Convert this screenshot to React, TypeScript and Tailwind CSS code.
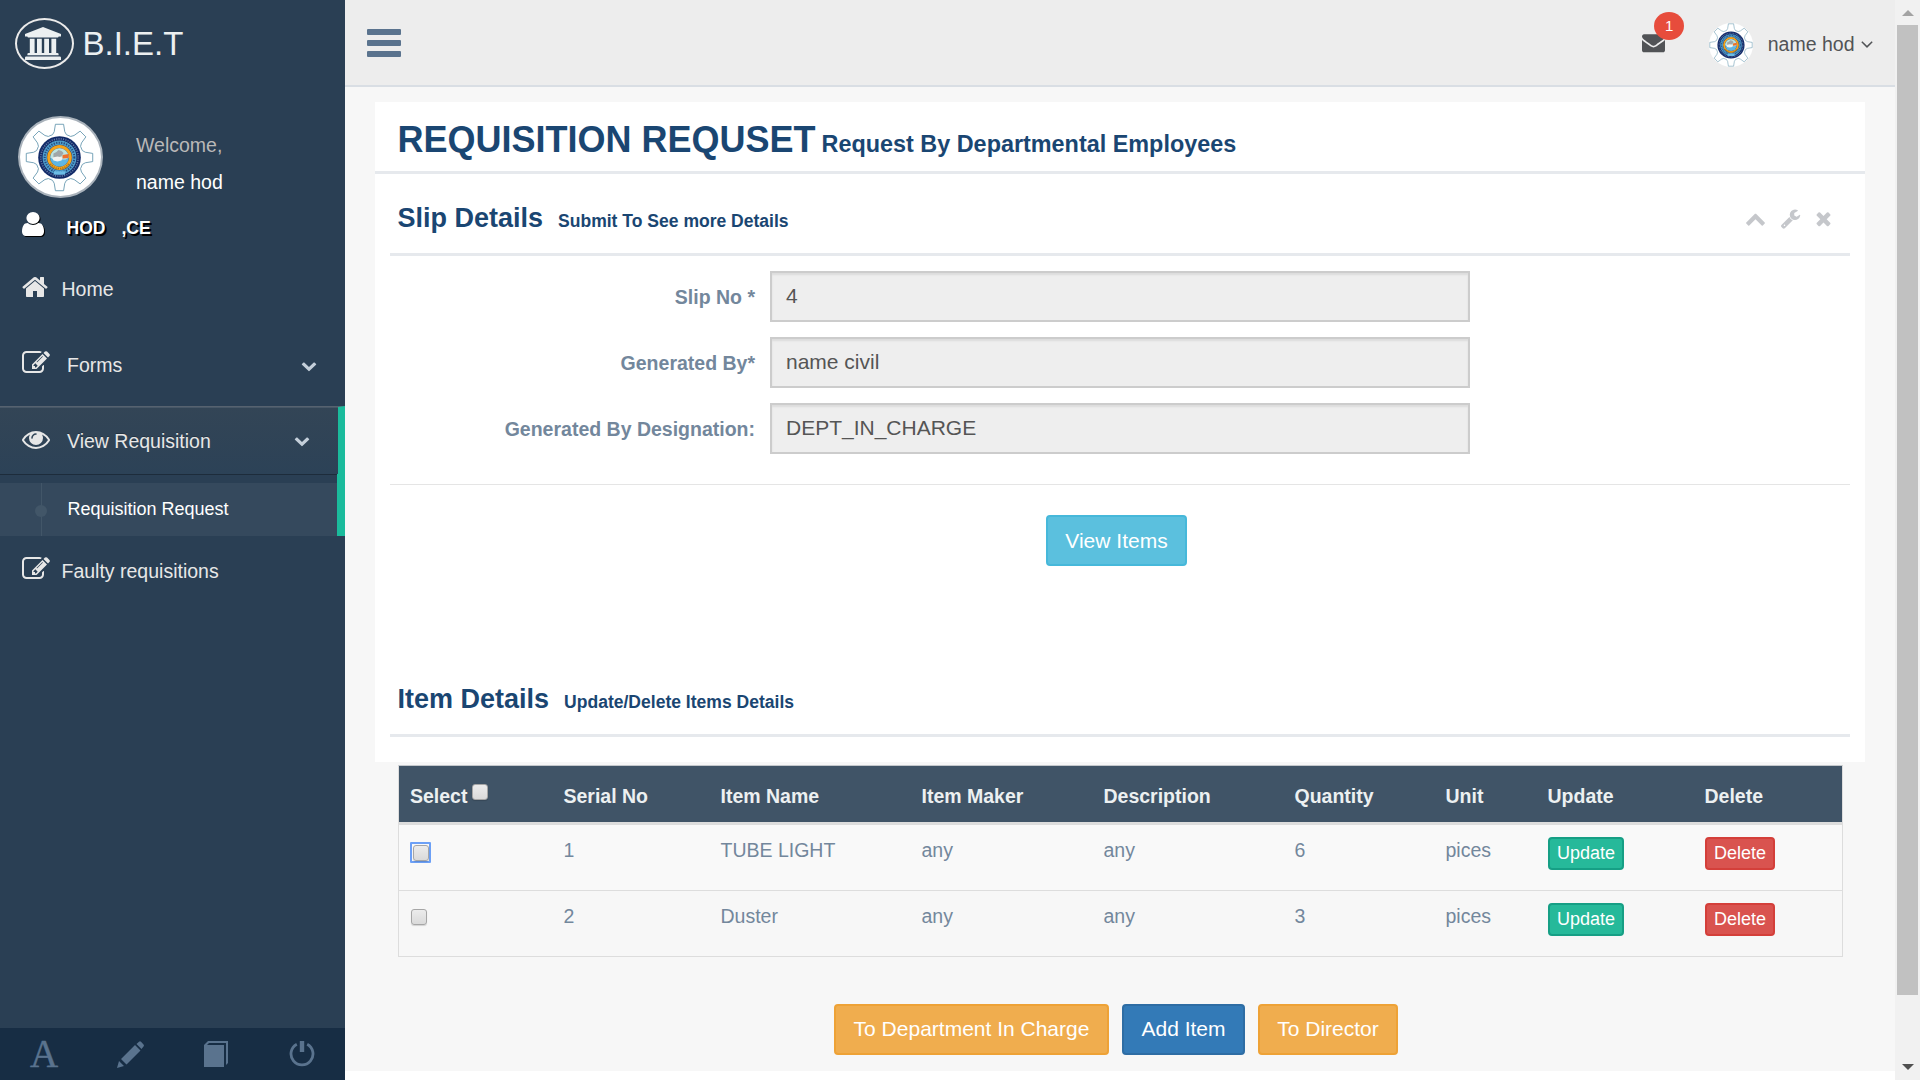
import React from "react";

const EDIT =
  "M888 1184l116-116-152-152-116 116v56h96v96h56zm440-720q-16-16-33 1l-350 350q-17 17-1 33t33-1l350-350q17-17 1-33zm80 594v190q0 119-84.5 203.5t-203.5 84.5h-832q-119 0-203.5-84.5t-84.5-203.5v-832q0-119 84.5-203.5t203.5-84.5h832q63 0 117 25 15 7 18 23 3 17-9 29l-49 49q-14 14-32 8-23-6-45-6h-832q-66 0-113 47t-47 113v832q0 66 47 113t113 47h832q66 0 113-47t47-113v-126q0-13 9-22l64-64q15-15 35-7t20 29zm-96-738l288 288-672 672h-288v-288zm444 132l-92 92-288-288 92-92q28-28 68-28t68 28l152 152q28 28 28 68t-28 68z";
const HOME =
  "M1472 992v480q0 26-19 45t-45 19h-384v-384h-256v384h-384q-26 0-45-19t-19-45v-480q0-1 .5-3t.5-3l575-474 575 474q1 2 1 6zm223-69l-62 74q-8 9-21 11h-3q-13 0-21-7l-692-577-692 577q-12 8-24 7-13-2-21-11l-62-74q-8-10-7-23.5t11-21.5l719-599q32-26 76-26t76 26l244 204v-195q0-14 9-23t23-9h192q14 0 23 9t9 23v408l219 182q10 8 11 21.5t-7 23.5z";
const EYE =
  "M1664 960q-152-236-381-353 61 104 61 225 0 185-131.5 316.5t-316.5 131.5-316.5-131.5-131.5-316.5q0-121 61-225-229 117-381 353 133 205 333.5 326.5t434.5 121.5 434.5-121.5 333.5-326.5zm-720-384q0-20-14-34t-34-14q-125 0-214.5 89.5t-89.5 214.5q0 20 14 34t34 14 34-14 14-34q0-86 61-147t147-61q20 0 34-14t14-34zm848 384q0 34-20 69-140 230-376.5 368.5t-499.5 138.5-499.5-139-376.5-368q-20-35-20-69t20-69q140-229 376.5-368t499.5-139 499.5 139 376.5 368q20 35 20 69z";
const BANK =
  "M960 0l960 384v128h-128q0 26-20.5 45t-48.5 19h-1526q-28 0-48.5-19t-20.5-45h-128v-128zm-704 640h256v768h128v-768h256v768h128v-768h256v768h128v-768h256v768h59q28 0 48.5 19t20.5 45v64h-1664v-64q0-26 20.5-45t48.5-19h59v-768zm1595 960q28 0 48.5 19t20.5 45v128h-1920v-128q0-26 20.5-45t48.5-19h1782z";
const USER =
  "M1536 1399q0 109-62.5 187t-150.5 78h-854q-88 0-150.5-78t-62.5-187q0-85 8.5-160.5t31.5-152 58.5-131 94-89 134.5-34.5q131 128 313 128t313-128q76 0 134.5 34.5t94 89 58.5 131 31.5 152 8.5 160.5zm-256-887q0 159-112.5 271.5t-271.5 112.5-271.5-112.5-112.5-271.5 112.5-271.5 271.5-112.5 271.5 112.5 112.5 271.5z";
const DOWN =
  "M1683 808l-742 741q-19 19-45 19t-45-19l-742-741q-19-19-19-45.5t19-45.5l166-165q19-19 45-19t45 19l531 531 531-531q19-19 45-19t45 19l166 165q19 19 19 45.5t-19 45.5z";
const UP =
  "M1683 1331l-166 165q-19 19-45 19t-45-19l-531-531-531 531q-19 19-45 19t-45-19l-166-165q-19-19-19-45.5t19-45.5l742-741q19-19 45-19t45 19l742 741q19 19 19 45.5t-19 45.5z";
const WRENCH =
  "M448 1472q0-26-19-45t-45-19-45 19-19 45 19 45 45 19 45-19 19-45zm644-420l-682 682q-37 37-90 37-52 0-91-37l-106-108q-38-36-38-90 0-53 38-91l681-681q39 98 114.5 173.5t173.5 114.5zm634-435q0 39-23 106-47 134-164.5 217.5t-258.5 83.5q-185 0-316.5-131.5t-131.5-316.5 131.5-316.5 316.5-131.5q58 0 121.5 16.5t107.5 46.5q16 11 16 28t-16 28l-293 169v224l193 107q5-3 79-48.5t135.5-81 70.5-35.5q15 0 23.5 10t8.5 25z";
const CLOSE =
  "M1490 1322q0 40-28 68l-136 136q-28 28-68 28t-68-28l-294-294-294 294q-28 28-68 28t-68-28l-136-136q-28-28-28-68t28-68l294-294-294-294q-28-28-28-68t28-68l136-136q28-28 68-28t68 28l294 294 294-294q28-28 68-28t68 28l136 136q28 28 28 68t-28 68l-294 294 294 294q28 28 28 68z";
const ENVELOPE =
  "M1792 710v794q0 66-47 113t-113 47h-1472q-66 0-113-47t-47-113v-794q44 49 101 87 362 246 497 345 57 42 92.5 65.5t94.5 48 110 24.5h2q51 0 110-24.5t94.5-48 92.5-65.5q170-123 498-345 57-39 100-87zm0-294q0 79-49 151t-122 123q-376 261-468 325-10 7-42.5 31t-54 38.5-52 32.5-57.5 27-50 9h-2q-23 0-50-9t-57.5-27-52-32.5-54-38.5-42.5-31q-91-64-262-182.5t-205-142.5q-62-42-117-115.5t-55-136.5q0-78 41.5-130t118.5-52h1472q65 0 112.5 47t47.5 113z";
const ANGLE =
  "M1395 736q0 13-10 23l-466 466q-10 10-23 10t-23-10l-466-466q-10-10-10-23t10-23l50-50q10-10 23-10t23 10l393 393 393-393q10-10 23-10t23 10l50 50q10 10 10 23z";

function Glyph({ d, className, box = "0 0 1792 1792" }: { d: string; className: string; box?: string }) {
  return (
    <svg viewBox={box} fill="currentColor" preserveAspectRatio="none" className={"shrink-0 " + className}>
      <path d={d} />
    </svg>
  );
}

function gearPath() {
  const pts: string[] = [];
  const profile: [number, number][] = [
    [-7, 33],
    [7, 33],
    [11.5, 26],
    [17, 23.5],
    [28, 23.5],
    [33.5, 26],
  ];
  for (let t = 0; t < 8; t++) {
    for (const [a, r] of profile) {
      const rad = ((t * 45 + a - 90) * Math.PI) / 180;
      pts.push((r * Math.cos(rad)).toFixed(2) + " " + (r * Math.sin(rad)).toFixed(2));
    }
  }
  return "M" + pts.join("L") + "Z";
}

function Seal({ className }: { className: string }) {
  return (
    <svg viewBox="-34 -34 68 68" className={className}>
      <path d={gearPath()} fill="#fff" stroke="#6b9bb2" strokeWidth="0.9" strokeLinejoin="round" />
      <circle r="21" fill="#122a68" />
      <circle r="18.4" fill="none" stroke="#8fa3c4" strokeWidth="1.6" strokeDasharray="1.1 1.2" opacity="0.65" />
      <circle r="14.6" fill="none" stroke="#4f9dca" strokeWidth="4.2" />
      <circle r="14.6" fill="none" stroke="#234a80" strokeWidth="2" strokeDasharray="1.2 1.3" />
      <path d="M-5.5 13.500h11v3.400h-11z" fill="#6cbce6" />
      <circle r="10.700" fill="none" stroke="#f5a31a" strokeWidth="3" />
      <path d="M-9 6.200A10.900 10.900 0 0 0 9 6.200" fill="none" stroke="#a8741c" strokeWidth="1.600" strokeDasharray="1.2 1" />
      <circle r="9.200" fill="#5fb6e4" />
      <path d="M-9 0A9 9 0 0 1 9 0L6 2-6 2Z" fill="#bfe3df" />
      <path d="M-6-4l3-1.500 2-2 3 1 2 2-2 3-4 2-4 1z" fill="#a0a6a8" />
      <path d="M-7 0l5-1 5 1-1 3-4 1-4-1z" fill="#f2f2f0" />
      <path d="M3-2.500l6-1v4l-6 .5z" fill="#ee6f2c" />
    </svg>
  );
}

function Check() {
  return (
    <span className="inline-block h-[16px] w-[16px] rounded-[3px] border border-[#a6a6a6] bg-linear-to-b from-[#ececec] to-[#dadada] shadow-[0_1px_1px_rgba(0,0,0,0.15)]" />
  );
}

const fields = [
  { label: "Slip No *", value: "4" },
  { label: "Generated By*", value: "name civil" },
  { label: "Generated By Designation:", value: "DEPT_IN_CHARGE" },
];

const headers = ["Serial No", "Item Name", "Item Maker", "Description", "Quantity", "Unit", "Update", "Delete"];

const rows = [
  { cells: ["1", "TUBE LIGHT", "any", "any", "6", "pices"], focused: true },
  { cells: ["2", "Duster", "any", "any", "3", "pices"], focused: false },
];

function Sidebar() {
  return (
    <aside className="flex h-full w-[345px] shrink-0 flex-col bg-[#2A3F54] text-[19.5px] text-[#E7E7E7]">
      <div className="flex h-[87px] shrink-0 items-center pl-[15px] text-[#ECF0F1]">
        <span className="flex h-[51px] w-[59px] items-center justify-center rounded-[50%] border-2 border-[#EAEAEA] pr-[3px]">
          <Glyph d={BANK} box="0 0 1920 1792" className="h-[33px] w-[36px]" />
        </span>
        <span className="ml-[8.5px] text-[33px] leading-[33px]">B.I.E.T</span>
      </div>

      <div className="mt-[29px] flex h-[82px] shrink-0 pl-[18px]">
        <span className="flex h-[82px] w-[85px] items-center justify-center rounded-[50%] border-2 border-[#A9B2BB] bg-white pr-[2px]">
          <Seal className="h-[69px] w-[69px]" />
        </span>
        <div className="ml-[33px] pt-[15px] leading-[29px]">
          <div className="h-[37px] text-[#BAB8B8]">Welcome,</div>
          <div className="text-white">name hod</div>
        </div>
      </div>

      <div className="mt-[14px] flex h-[33px] shrink-0 items-center pl-[22px] text-white">
        <Glyph d={USER} box="256 128 1280 1536" className="mb-[10px] h-[24px] w-[22px] drop-shadow-[1px_1px_0px_#000]" />
        <span className="ml-[22.5px] text-[17.55px] font-bold whitespace-pre [text-shadow:2px_2px_#000]">
          HOD<span className="ml-[16px]">,CE</span>
        </span>
      </div>

      <div className="mt-[9px] flex h-[71px] shrink-0 items-center pl-[21px]">
        <Glyph d={HOME} className="mb-[6px] h-[28px] w-[28px]" />
        <span className="ml-[12.5px] pt-px">Home</span>
      </div>

      <div className="flex h-[81px] shrink-0 items-center pr-[28px] pl-[22px]">
        <Glyph d={EDIT} className="mb-[6px] h-[28px] w-[28px]" />
        <span className="ml-[17px] flex-1">Forms</span>
        <Glyph d={DOWN} className="h-[15px] w-[16px] text-[#C4CFDA]" />
      </div>

      <div className="flex h-[68px] shrink-0 items-center border-t border-r-[7px] border-t-[#56626f] border-r-[#1ABB9C] bg-linear-to-b from-[#334556] to-[#2C4257] pr-[28px] pl-[22px] shadow-[inset_0_1px_0_rgba(255,255,255,0.1),0_1px_0_#1d2c3b] [text-shadow:0_-1px_0_rgba(0,0,0,0.25)]">
        <Glyph d={EYE} className="mb-[4px] h-[28px] w-[28px]" />
        <span className="ml-[17px] flex-1 pt-[3px]">View Requisition</span>
        <Glyph d={DOWN} className="h-[15px] w-[16px] text-[#C4CFDA]" />
      </div>
      <div className="h-[62px] shrink-0 border-r-8 border-[#1ABB9C] pt-[9px]">
        <div className="relative flex h-[53px] items-center bg-[#35495D] pl-[67.5px] text-[18px] text-white">
          <span className="absolute top-0 left-[41px] h-full w-px bg-[#425668]" />
          <span className="absolute top-[22px] left-[35px] h-[12px] w-[12px] rounded-full bg-[#425668]" />
          Requisition Request
        </div>
      </div>

      <div className="flex h-[70px] shrink-0 items-center pl-[22px]">
        <Glyph d={EDIT} className="mb-[5px] h-[28px] w-[28px]" />
        <span className="ml-[11.5px] pt-px">Faulty requisitions</span>
      </div>

      <div className="mt-auto grid h-[52px] shrink-0 grid-cols-4 items-center justify-items-center bg-[#172D44] pl-px text-[#5A738E]">
        <span className="font-['Liberation_Serif',serif] text-[39px] leading-[52px] [-webkit-text-stroke:0.4px_#5A738E]">A</span>
        <svg viewBox="0 0 27 27" className="h-[27px] w-[27px]" fill="currentColor">
          <path d="M0 27l2-7 5 5zM4 18L18 4l5.500 5.500-14 14zM19.500 3l2.500-2.300q1-.9 2 0l2.500 2.800q.9 1 0 2L24.500 8z" />
        </svg>
        <svg viewBox="0 0 24 26" className="h-[26px] w-[24px]" fill="currentColor">
          <path d="M0 4L4 0H24V22L22 24V2H5L3 4H20V26H0Z" />
        </svg>
        <svg viewBox="0 0 26 26" className="h-[26px] w-[26px]">
          <path d="M7.800 3.200A11 11 0 1 0 18.200 3.200" fill="none" stroke="currentColor" strokeWidth="2.800" />
          <path d="M10.800 0h4.400v11h-4.400z" fill="currentColor" />
        </svg>
      </div>
    </aside>
  );
}

function Topbar() {
  return (
    <header className="flex h-[87px] shrink-0 items-center border-b-2 border-[#D9DEE4] bg-[#EDEDED] pr-[18px] pl-[22px]">
      <div className="mt-px flex w-[34px] flex-col gap-[5px]">
        <span className="h-[6px] rounded-[1px] bg-[#5A738E]" />
        <span className="h-[6px] rounded-[1px] bg-[#5A738E]" />
        <span className="h-[6px] rounded-[1px] bg-[#5A738E]" />
      </div>
      <div className="ml-auto flex items-center text-[19.5px] text-[#515356]">
        <div className="relative mr-[44px]">
          <Glyph d={ENVELOPE} className="h-[23px] w-[23px]" />
          <span className="absolute -top-[19px] left-[12px] flex h-[28px] w-[30px] items-center justify-center rounded-[50%] bg-[#E74C3C] text-[15px] text-white">
            1
          </span>
        </div>
        <span className="mt-[5px] mr-[14.5px] flex h-[44px] w-[44px] items-center justify-center rounded-full bg-white">
          <Seal className="h-[44px] w-[44px]" />
        </span>
        <span className="mt-[4px]">name hod</span>
        <Glyph d={ANGLE} className="mt-[3px] ml-[2.5px] h-[20px] w-[20px]" />
      </div>
    </header>
  );
}

function SectionTitle({ title, note, children }: { title: string; note: string; children?: React.ReactNode }) {
  return (
    <div className="mx-[15px] flex h-[82px] items-center justify-between border-b-[3px] border-[#E6E9ED] pr-[16px] pb-[4px] pl-[7.5px]">
      <h2 className="pt-[16px] text-[27px] leading-[30px] font-bold text-[#1A4672]">
        {title}
        <small className="ml-[15px] text-[17.55px]">{note}</small>
      </h2>
      {children}
    </div>
  );
}

export default function App() {
  return (
    <div className="flex h-[1080px] w-[1920px] overflow-hidden bg-white font-['Liberation_Sans',Arial,sans-serif]">
      <Sidebar />

      <div className="flex w-[1550px] shrink-0 flex-col">
        <Topbar />
        <main className="h-[984px] bg-[#F7F7F7] px-[30px] pt-[15px]">
          <section className="h-[660px] w-[1490px] bg-white">
            <h1 className="h-[72px] border-b-[3px] border-[#E6E9ED] pt-[18px] pl-[22.5px] text-[36px] leading-[40px] font-bold text-[#1A4672]">
              REQUISITION REQUSET<small className="ml-[6px] text-[23.4px]">Request By Departmental Employees</small>
            </h1>

            <SectionTitle title="Slip Details" note="Submit To See more Details">
              <div className="flex items-center pt-[14px] text-[#C5C7CB]">
                <Glyph d={UP} className="h-[21px] w-[21px]" />
                <Glyph d={WRENCH} className="ml-[14px] h-[21px] w-[21px]" />
                <Glyph d={CLOSE} className="ml-[12px] h-[21px] w-[21px]" />
              </div>
            </SectionTitle>

            <div className="flex flex-col gap-[15px] pt-[15px]">
              {fields.map((f) => (
                <div key={f.label} className="flex h-[51px]">
                  <div className="w-[380px] pt-[12px] text-right text-[19.5px] leading-[28px] font-bold text-[#73879C]">
                    {f.label}
                  </div>
                  <div className="ml-[15px] flex w-[700px] items-center border-2 border-[#CCCCCC] bg-[#EEEEEE] pb-[2px] pl-[14px] text-[21px] text-[#555555] shadow-[inset_0_2px_2px_rgba(0,0,0,0.075)]">
                    {f.value}
                  </div>
                </div>
              ))}
            </div>

            <div className="mx-[15px] mt-[30px] h-px bg-[#E5E5E5]" />

            <div className="mt-[30px] flex pl-[671px]">
              <button className="h-[51px] w-[141px] rounded-[4px] border-2 border-[#46B8DA] bg-[#5BC0DE] text-[21px] text-white">
                View Items
              </button>
            </div>

            <div className="mt-[89px]">
              <SectionTitle title="Item Details" note="Update/Delete Items Details" />
            </div>
          </section>

          <table className="mt-[3px] ml-[23px] w-[1445px] table-fixed border-separate border-spacing-0 border border-[#DDDDDD] border-t-[#C4C8CC] text-left text-[19.5px] leading-[28px] text-[#73879C]">
            <colgroup>
              <col className="w-[153px]" />
              <col className="w-[157px]" />
              <col className="w-[201px]" />
              <col className="w-[182px]" />
              <col className="w-[191px]" />
              <col className="w-[151px]" />
              <col className="w-[102px]" />
              <col className="w-[157px]" />
              <col className="w-[149px]" />
            </colgroup>
            <thead>
              <tr className="h-[59px] bg-[#405467] text-[#ECF0F1]">
                <th className="border-b-[3px] border-[#DDDDDD] p-0 pt-[16px] pl-[11px] align-top font-bold">
                  <span className="flex items-start gap-[5px]">
                    Select
                    <span className="flex pt-[2px]">
                      <Check />
                    </span>
                  </span>
                </th>
                {headers.map((h) => (
                  <th key={h} className="border-b-[3px] border-[#DDDDDD] p-0 pt-[16px] pl-[11.5px] align-top font-bold">
                    {h}
                  </th>
                ))}
              </tr>
            </thead>
            <tbody>
              {rows.map((r, i) => (
                <tr key={i} className={i === 0 ? "h-[66px] bg-[#F9F9F9]" : "h-[65px]"}>
                  <td className={(i === 0 ? "border-b " : "") + "border-[#DDDDDD] p-0 pt-[17px] pl-[11px] align-top leading-[0]"}>
                    <span
                      className={
                        r.focused
                          ? "inline-flex h-[21px] w-[21px] items-center justify-center rounded-[1px] border-2 border-[#6CA0F6]"
                          : "inline-flex pt-px pl-px"
                      }
                    >
                      <Check />
                    </span>
                  </td>
                  {r.cells.map((c, j) => (
                    <td key={j} className={(i === 0 ? "border-b " : "") + "border-[#DDDDDD] p-0 pt-[11px] pl-[11.5px] align-top"}>
                      {c}
                    </td>
                  ))}
                  <td className={(i === 0 ? "border-b " : "") + "border-[#DDDDDD] p-0 pt-[12px] pl-[12px] align-top"}>
                    <button className="block h-[33px] w-[76px] rounded-[4px] border-2 border-[#169F85] bg-[#26B99A] text-[18px] leading-[29px] text-white">
                      Update
                    </button>
                  </td>
                  <td className={(i === 0 ? "border-b " : "") + "border-[#DDDDDD] p-0 pt-[12px] pl-[12px] align-top"}>
                    <button className="block h-[33px] w-[70px] rounded-[4px] border-2 border-[#D43F3A] bg-[#D9534F] text-[18px] leading-[29px] text-white">
                      Delete
                    </button>
                  </td>
                </tr>
              ))}
            </tbody>
          </table>

          <div className="mt-[47px] flex gap-[13px] pl-[459px] text-[21px] text-white">
            <button className="h-[51px] w-[275px] rounded-[4px] border-2 border-[#EEA236] bg-[#F0AD4E] pb-[2px]">
              To Department In Charge
            </button>
            <button className="h-[51px] w-[123px] rounded-[4px] border-2 border-[#2E6DA4] bg-[#337AB7] pb-[2px]">
              Add Item
            </button>
            <button className="h-[51px] w-[140px] rounded-[4px] border-2 border-[#EEA236] bg-[#F0AD4E] pb-[2px]">
              To Director
            </button>
          </div>
        </main>
      </div>

      <div className="flex w-[25px] shrink-0 flex-col items-center bg-[#F1F1F1]">
        <svg viewBox="0 0 12 6" className="mt-[10px] h-[6px] w-[12px]" fill="#A3A3A3">
          <path d="M0 6L6 0L12 6Z" />
        </svg>
        <div className="mt-[9px] h-[970px] w-[21px] bg-[#C1C1C1]" />
        <svg viewBox="0 0 12 6" className="mt-[69px] h-[6px] w-[12px]" fill="#505050">
          <path d="M0 0L6 6L12 0Z" />
        </svg>
      </div>
    </div>
  );
}
